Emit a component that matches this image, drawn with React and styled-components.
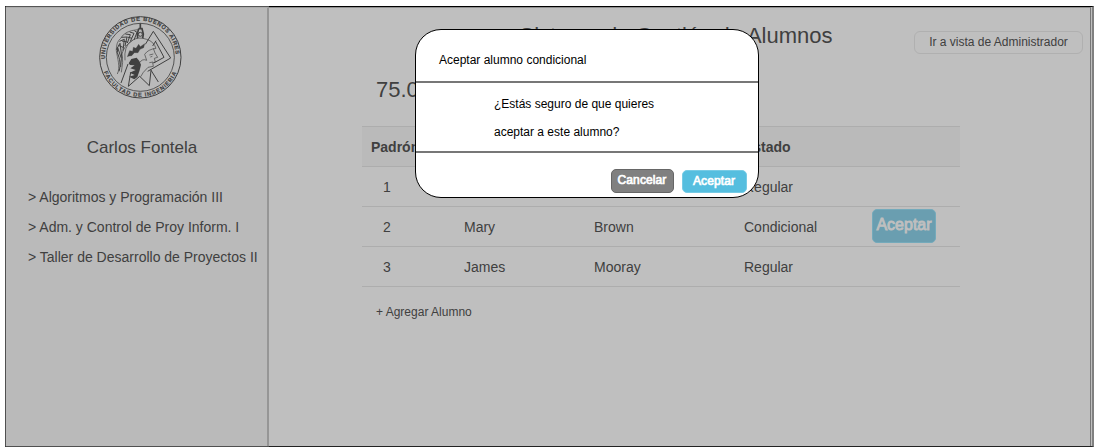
import React from "react";
import styled, { createGlobalStyle } from "styled-components";

const GlobalStyle = createGlobalStyle`
  * { box-sizing: border-box; }
  body {
    margin: 0;
    background: #fff;
    color: #404040;
    font-family: "Liberation Sans", Arial, Helvetica, sans-serif;
    overflow: hidden;
  }
`;

const Page = styled.div`
  width: 1094px;
  height: 448px;
  padding: 6px 0 1px 5px;
`;

const Frame = styled.div`
  position: relative;
  display: flex;
  width: 1089px;
  height: 441px;
  background: #bfbfbf;
  border: 1px solid #000;
  border-left-color: #505050;
  border-right: 2px solid #808080;
  border-bottom-color: #222;
`;

const Sidebar = styled.aside`
  display: flex;
  flex-direction: column;
  align-items: center;
  width: 263px;
  background: #bababa;
  border-top: 1px solid #adadad;
  border-right: 2px solid #969696;
  box-shadow: 0 -1px 0 #555, 0 1px 0 #505050;
`;

const Crest = styled.svg`
  width: 100px;
  height: 100px;
  margin-left: 7px;
`;

const UserName = styled.h2`
  margin: 28px 0 0 11px;
  font-size: 17px;
  font-weight: 400;
  line-height: 24px;
`;

const Courses = styled.nav`
  align-self: stretch;
  display: flex;
  flex-direction: column;
  margin-top: 22px;
  padding-left: 22px;
`;

const Course = styled.a`
  font-size: 14px;
  line-height: 30px;
  white-space: nowrap;
`;

const Main = styled.main`
  flex: 1;
  display: flex;
  flex-direction: column;
  margin-right: 1px;
  border-top: 1px solid #8f8f8f;
  border-right: 1px solid #777;
`;

const TopBar = styled.header`
  display: grid;
  grid-template-columns: 1fr auto 1fr;
  height: 60px;
  padding: 15px 7px 0 0;
`;

const Title = styled.h1`
  grid-column: 2;
  margin: 0;
  font-size: 22px;
  line-height: 26px;
  font-weight: 400;
  white-space: nowrap;
`;

const ViewSwitch = styled.button`
  justify-self: end;
  width: 169px;
  height: 23px;
  margin-top: 8px;
  padding: 0 0 1px;
  border: 1px solid #b0b0b0;
  border-radius: 6px;
  background: transparent;
  color: #404040;
  font: 12px/20px "Liberation Sans", Arial, sans-serif;
  white-space: nowrap;
`;

const Subject = styled.h2`
  margin: 9px 0 0 107px;
  font-size: 22px;
  line-height: 26px;
  font-weight: 400;
`;

const Table = styled.div`
  width: 598px;
  margin: 23px 0 0 93px;
  border-top: 1px solid #adadad;
`;

const Row = styled.div`
  display: grid;
  grid-template-columns: 102px 130px 150px 128px 64px;
  align-items: center;
  height: 40px;
  border-bottom: 1px solid #adadad;
  background: ${(p) => (p.$head ? "#bababa" : "transparent")};
  font-size: 14px;
  line-height: 20px;
  font-weight: ${(p) => (p.$head ? 700 : 400)};
`;

const Cell = styled.span`
  padding-left: ${(p) => p.$indent || 0}px;
`;

const RowButton = styled.button`
  width: 64px;
  height: 34px;
  margin-bottom: 1px;
  padding: 0 0 3px;
  border: 1px solid #74aabb;
  border-radius: 5px;
  background: #6a9eb0;
  color: #bfbfbf;
  font: 400 16px/30px "Liberation Sans", Arial, sans-serif;
  -webkit-text-stroke: 0.9px #bfbfbf;
`;

const AddLink = styled.a`
  margin: 16px 0 0 107px;
  font-size: 12px;
  line-height: 18px;
`;

const Dialog = styled.section`
  position: absolute;
  left: 409px;
  top: 22px;
  width: 344px;
  height: 169px;
  overflow: hidden;
  background: #fff;
  border: 1px solid #000;
  border-radius: 26px;
  color: #000;
  font-size: 12px;
`;

const DialogTitle = styled.div`
  height: 53px;
  padding: 20px 0 0 23px;
  line-height: 20px;
  border-bottom: 2px solid #777;
`;

const DialogText = styled.p`
  height: 70px;
  margin: 0;
  padding: 7px 0 0 78px;
  line-height: 28px;
  border-bottom: 2px solid #777;
`;

const DialogActions = styled.div`
  display: flex;
  gap: 8px;
  padding: 16px 0 0 195px;
`;

const DialogButton = styled.button`
  width: ${(p) => (p.$primary ? 65 : 63)}px;
  height: ${(p) => (p.$primary ? 23 : 24)}px;
  margin-top: ${(p) => (p.$primary ? 1 : 0)}px;
  padding: 0 1px 2px 0;
  border: 1px solid ${(p) => (p.$primary ? "#77cbe5" : "#666")};
  border-radius: 5px;
  background: ${(p) => (p.$primary ? "#55bedf" : "#808080")};
  color: #fff;
  font: 400 12px/18px "Liberation Sans", Arial, sans-serif;
  letter-spacing: 0.1px;
  -webkit-text-stroke: 0.7px #fff;
`;

const courses = [
  "Algoritmos y Programación III",
  "Adm. y Control de Proy Inform. I",
  "Taller de Desarrollo de Proyectos II",
];

const students = [
  { id: 1, name: "John", surname: "Doe", status: "Regular" },
  { id: 2, name: "Mary", surname: "Brown", status: "Condicional" },
  { id: 3, name: "James", surname: "Mooray", status: "Regular" },
];

function FacultyCrest() {
  return (
    <Crest viewBox="0 0 300 300" fill="none" stroke="#404040" strokeWidth="3">
      <defs>
        <path id="upperArc" d="M46 159 A106 106 0 1 1 256 159" />
        <path id="lowerArc" d="M35 170 A118 118 0 0 0 267 170" />
      </defs>
      <circle cx="151" cy="148" r="122" />
      <circle cx="151" cy="148" r="102" strokeWidth="2.5" />
      <g fill="#404040" stroke="#404040" strokeWidth="0.5" fontSize="17" fontWeight="700">
        <text>
          <textPath href="#upperArc" startOffset="6" textLength="336">UNIVERSIDAD DE BUENOS AIRES</textPath>
        </text>
        <text>
          <textPath href="#lowerArc" startOffset="23" textLength="278">FACULTAD DE INGENIERIA</textPath>
        </text>
      </g>
      <path d="M190 70L242 150L173 190M190 70L166 109M196 99L222 148L191 165M198 98L188 114" />
      <path d="M114 168L93 225M182 185L205 222M122 193L115 235L149 205L178 233L183 187" />
      <path d="M151 46V62M146 62H156L160 78L158 91M146 62L142 78L143 91" strokeWidth="5" />
      <circle cx="151" cy="79" r="6" />
      <path
        d="M82 198C92 178 82 150 79 128Q78 102 92 91Q104 68 143 65M94 193Q101 160 96 138Q101 114 128 97"
        strokeWidth="2"
      />
      <path d="M87 190C93 171 90 153 82 134L83 119L94 151L92 177M79 125L90 106L96 151M88 100L103 94L99 128M94 88L111 87L105 114M106 78L121 80L112 105M119 72L132 76L121 100M133 68L141 73L132 96M85 112L99 118M96 99L112 102M112 87L126 91" strokeWidth="3" />
      <path d="M105 157Q101 115 124 99Q143 84 170 94Q192 101 198 121Q174 124 164 139L170 157Q157 151 149 164" strokeWidth="2" />
      <path d="M112 146L119 128L128 130L130 118L138 121L146 109L151 116L164 107L161 119L150 124L144 134L133 134L125 143L117 144Z" fill="#404040" strokeWidth="1" />
      <path
        d="M116 166L124 153L140 149L148 159L153 170L149 187L142 207L133 214L117 206L134 201L119 194L137 186L121 181L134 172L120 171Z"
        fill="#404040"
        stroke="none"
      />
      <path d="M190 121L195 135L203 148L193 151L196 162L188 164L190 175L174 178L160 193L152 206M178 141L190 138M181 147L187 145M178 164L189 162" strokeWidth="2" />
    </Crest>
  );
}

export default function App() {
  return (
    <>
      <GlobalStyle />
      <Page>
        <Frame>
          <Sidebar>
            <FacultyCrest />
            <UserName>Carlos Fontela</UserName>
            <Courses>
              {courses.map((c) => (
                <Course key={c}>&gt; {c}</Course>
              ))}
            </Courses>
          </Sidebar>
          <Main>
            <TopBar>
              <Title>Sistema de Gestión de Alumnos</Title>
              <ViewSwitch>Ir a vista de Administrador</ViewSwitch>
            </TopBar>
            <Subject>75.07</Subject>
            <Table>
              <Row $head>
                <Cell $indent={9}>Padrón</Cell>
                <Cell>Nombre</Cell>
                <Cell>Apellido</Cell>
                <Cell>Estado</Cell>
              </Row>
              {students.map((s) => (
                <Row key={s.id}>
                  <Cell $indent={21}>{s.id}</Cell>
                  <Cell>{s.name}</Cell>
                  <Cell>{s.surname}</Cell>
                  <Cell>{s.status}</Cell>
                  {s.status === "Condicional" && <RowButton>Aceptar</RowButton>}
                </Row>
              ))}
            </Table>
            <AddLink>+ Agregar Alumno</AddLink>
          </Main>
          <Dialog role="dialog">
            <DialogTitle>Aceptar alumno condicional</DialogTitle>
            <DialogText>
              ¿Estás seguro de que quieres
              <br />
              aceptar a este alumno?
            </DialogText>
            <DialogActions>
              <DialogButton>Cancelar</DialogButton>
              <DialogButton $primary>Aceptar</DialogButton>
            </DialogActions>
          </Dialog>
        </Frame>
      </Page>
    </>
  );
}
